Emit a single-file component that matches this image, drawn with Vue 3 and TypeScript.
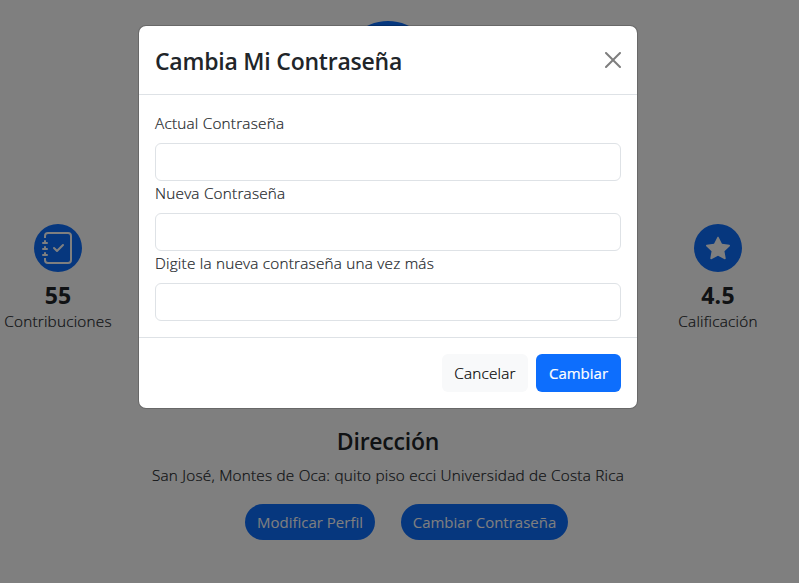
<script setup lang="ts">
import { reactive } from 'vue'

interface Field {
  key: 'current' | 'next' | 'repeat'
  label: string
}

const fields: Field[] = [
  { key: 'current', label: 'Actual Contraseña' },
  { key: 'next', label: 'Nueva Contraseña' },
  { key: 'repeat', label: 'Digite la nueva contraseña una vez más' },
]
const form = reactive({ current: '', next: '', repeat: '' })
</script>

<template>
  <div class="screen">
    <main class="profile">
      <div class="avatar"></div>
      <section class="stats">
        <div class="stat">
          <span class="badge">
            <svg width="32" height="32" viewBox="0 0 16 16" fill="currentColor">
              <path fill-rule="evenodd" d="M10.854 6.146a.5.5 0 0 1 0 .708l-3 3a.5.5 0 0 1-.708 0l-1.5-1.5a.5.5 0 1 1 .708-.708L7.5 8.793l2.646-2.647a.5.5 0 0 1 .708 0z" />
              <path d="M3 0h10a2 2 0 0 1 2 2v12a2 2 0 0 1-2 2H3a2 2 0 0 1-2-2v-1h1v1a1 1 0 0 0 1 1h10a1 1 0 0 0 1-1V2a1 1 0 0 0-1-1H3a1 1 0 0 0-1 1v1H1V2a2 2 0 0 1 2-2z" />
              <path d="M1 5v-.5a.5.5 0 0 1 1 0V5h.5a.5.5 0 0 1 0 1h-2a.5.5 0 0 1 0-1H1zm0 3v-.5a.5.5 0 0 1 1 0V8h.5a.5.5 0 0 1 0 1h-2a.5.5 0 0 1 0-1H1zm0 3v-.5a.5.5 0 0 1 1 0v.5h.5a.5.5 0 0 1 0 1h-2a.5.5 0 0 1 0-1H1z" />
            </svg>
          </span>
          <strong class="value">55</strong>
          <span class="caption">Contribuciones</span>
        </div>
        <div class="stat">
          <span class="badge">
            <svg width="24" height="24" viewBox="0 0 16 16" fill="currentColor">
              <path d="M3.612 15.443c-.386.198-.824-.149-.746-.592l.83-4.73L.173 6.765c-.329-.314-.158-.888.283-.95l4.898-.696L7.538.792c.197-.39.73-.39.927 0l2.184 4.327 4.898.696c.441.062.612.636.282.95l-3.522 3.356.83 4.73c.078.443-.36.79-.746.592L8 13.187l-4.389 2.256z" />
            </svg>
          </span>
          <strong class="value">4.5</strong>
          <span class="caption">Calificación</span>
        </div>
      </section>
      <section class="address">
        <h4 class="heading">Dirección</h4>
        <p class="place">San José, Montes de Oca: quito piso ecci Universidad de Costa Rica</p>
        <div class="actions">
          <button type="button" class="pill edit">Modificar Perfil</button>
          <button type="button" class="pill change">Cambiar Contraseña</button>
        </div>
      </section>
    </main>

    <div class="backdrop">
      <form class="modal" role="dialog" @submit.prevent>
        <header class="modal-header">
          <h4 class="title">Cambia Mi Contraseña</h4>
          <button type="button" class="close" aria-label="Cerrar">
            <svg width="16" height="16" viewBox="0 0 16 16">
              <path d="M.293.293a1 1 0 0 1 1.414 0L8 6.586 14.293.293a1 1 0 1 1 1.414 1.414L9.414 8l6.293 6.293a1 1 0 0 1-1.414 1.414L8 9.414l-6.293 6.293a1 1 0 0 1-1.414-1.414L6.586 8 .293 1.707a1 1 0 0 1 0-1.414z" />
            </svg>
          </button>
        </header>
        <div class="modal-body">
          <div v-for="field in fields" :key="field.key" class="field">
            <label :for="field.key">{{ field.label }}</label>
            <input :id="field.key" v-model="form[field.key]" type="password" class="input" />
          </div>
        </div>
        <footer class="modal-footer">
          <button type="button" class="btn light">Cancelar</button>
          <button type="submit" class="btn primary">Cambiar</button>
        </footer>
      </form>
    </div>
  </div>
</template>

<style>
body {
  margin: 0;
  overflow: hidden;
}
</style>

<style scoped>
* {
  box-sizing: border-box;
}
.screen {
  position: relative;
  width: 799px;
  height: 583px;
  overflow: hidden;
  background: #fff;
  color: #212529;
  font: 300 15.3px/24px "Open Sans", "Noto Sans", sans-serif;
  letter-spacing: 0.22px;
}
h4,
p {
  margin: 0;
}
button,
input {
  font: inherit;
  letter-spacing: inherit;
}
.caption,
.place,
label,
.light {
  -webkit-text-stroke: 0.2px currentColor;
}
.profile {
  display: flex;
  flex-direction: column;
  align-items: center;
  width: 776px;
  padding-top: 21px;
}
.avatar {
  width: 96px;
  height: 96px;
  border-radius: 50%;
  background: #0d6efd;
}
.stats {
  display: flex;
  justify-content: space-between;
  width: 776px;
  margin-top: 107px;
}
.stat {
  display: flex;
  flex-direction: column;
  align-items: center;
  width: 116px;
}
.badge {
  display: flex;
  align-items: center;
  justify-content: center;
  width: 48px;
  height: 48px;
  border-radius: 50%;
  background: #0d6efd;
  color: #fff;
}
.value {
  margin-top: 8px;
  font-size: 23px;
  font-weight: 700;
  line-height: 30px;
}
.caption {
  margin-top: -1px;
  white-space: nowrap;
}
.address {
  display: flex;
  flex-direction: column;
  align-items: center;
  margin-top: 94px;
}
.heading,
.title {
  font-size: 23px;
  font-weight: 600;
  letter-spacing: -0.22px;
}
.heading {
  line-height: 29px;
}
.place {
  margin-top: 7px;
  white-space: nowrap;
}
.actions {
  display: flex;
  gap: 26px;
  margin: 17px 0 0 37px;
}
.pill {
  height: 36px;
  padding: 0;
  border: 0;
  border-radius: 18px;
  background: #0d6efd;
  color: #fff;
  font-size: 15px;
  font-weight: 400;
  letter-spacing: 0;
  white-space: nowrap;
}
.edit {
  width: 130px;
}
.change {
  width: 167px;
}
.backdrop {
  position: absolute;
  inset: 0;
  display: flex;
  align-items: flex-start;
  padding: 25px 0 0 138px;
  background: rgba(0, 0, 0, 0.5);
}
.modal {
  width: 500px;
  border: 1px solid rgba(0, 0, 0, 0.175);
  border-radius: 8px;
  background: #fff;
  background-clip: padding-box;
}
.modal-header {
  display: flex;
  align-items: center;
  justify-content: space-between;
  height: 69px;
  padding: 0 16px;
  border-bottom: 1px solid #dee2e6;
}
.title {
  padding-top: 2px;
  line-height: 36px;
}
.close {
  display: flex;
  padding: 0;
  border: 0;
  background: none;
  opacity: 0.5;
}
.modal-body {
  padding: 16px;
}
.field {
  display: flex;
  flex-direction: column;
  gap: 8px;
}
.input {
  height: 38px;
  padding: 6px 12px;
  border: 1px solid #dee2e6;
  border-radius: 6px;
  background: #fff;
}
.modal-footer {
  display: flex;
  justify-content: flex-end;
  gap: 8px;
  padding: 16px;
  border-top: 1px solid #dee2e6;
}
.btn {
  height: 38px;
  padding: 0;
  border: 0;
  border-radius: 6px;
}
.light {
  width: 86px;
  background: #f8f9fa;
  color: #000;
}
.primary {
  width: 85px;
  background: #0d6efd;
  color: #fff;
  font-size: 15px;
  font-weight: 400;
  letter-spacing: 0;
  -webkit-text-stroke: 0.2px currentColor;
}
</style>
